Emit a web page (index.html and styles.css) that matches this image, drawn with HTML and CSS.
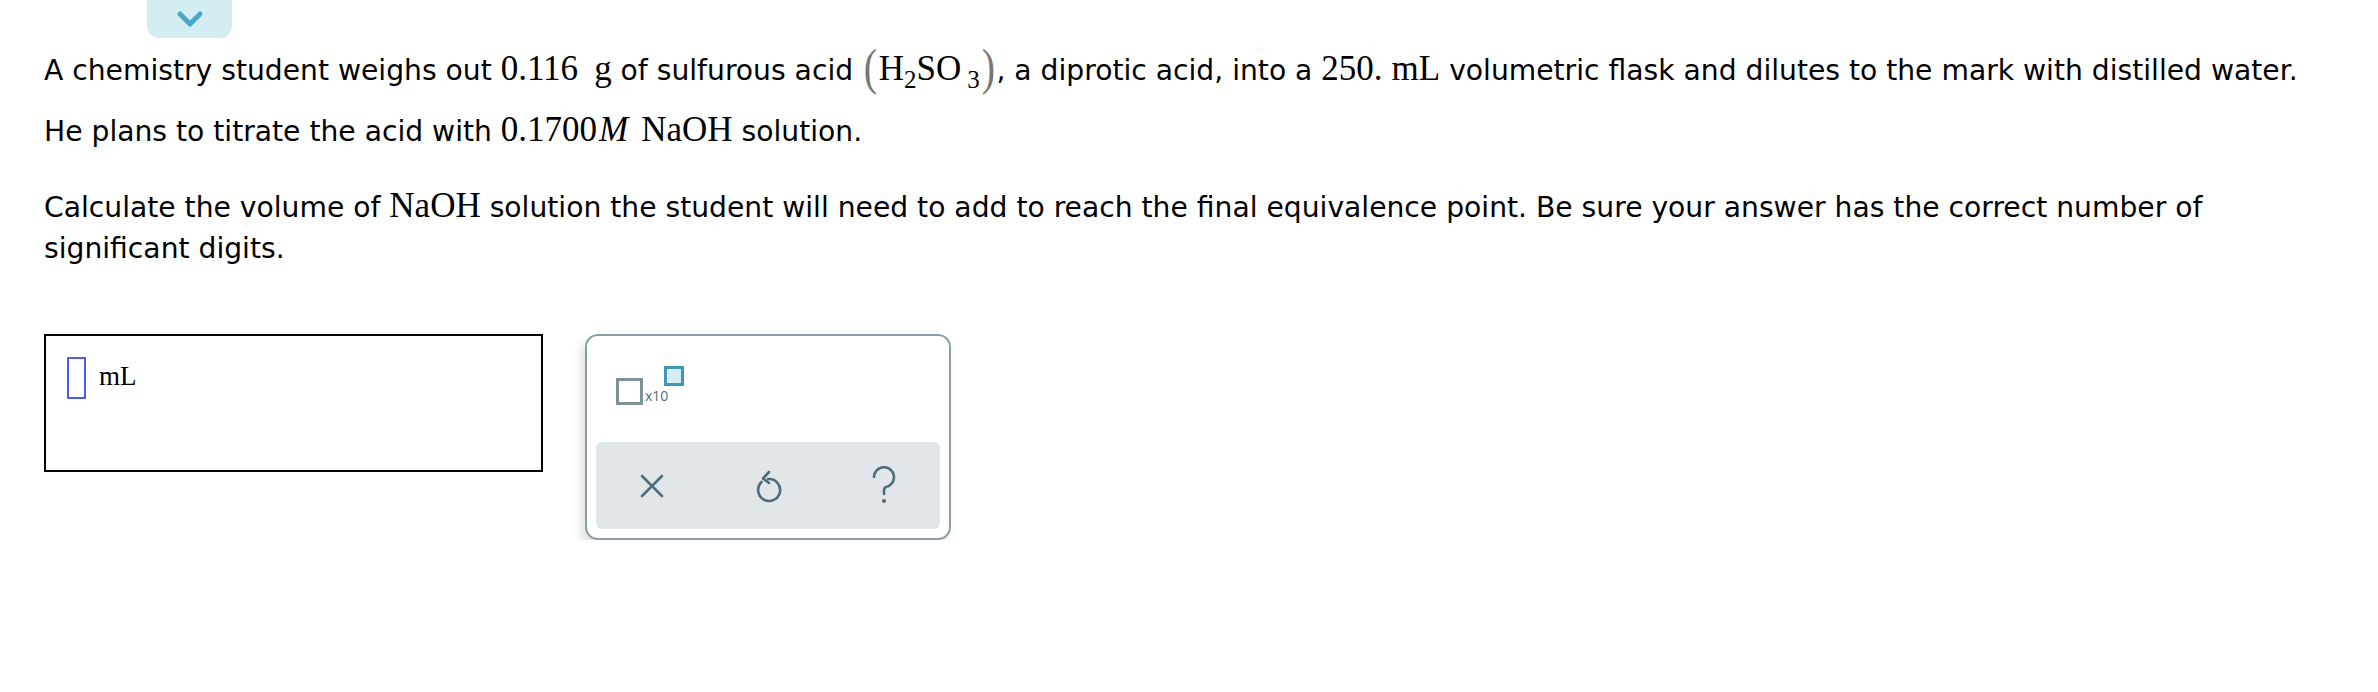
FILE: index.html
```html
<!DOCTYPE html>
<html>
<head>
<meta charset="utf-8">
<link rel="stylesheet" href="styles.css">
</head>
<body>
<div class="page">
  <div class="tabbar">
    <div class="tab-toggle">
      <svg width="30" height="20" viewBox="0 0 30 20"><path d="M5 5 L15 15 L25 5" fill="none" stroke="#4aa8c8" stroke-width="5" stroke-linecap="round" stroke-linejoin="round"/></svg>
    </div>
  </div>
  <p class="para para1">A chemistry student weighs out <span class="m">0.116</span><span class="m gap">g</span> of sulfurous acid <span class="m paren">(</span><span class="m">H<sub>2</sub>SO<sub class="s3">3</sub></span><span class="m paren">)</span>, a diprotic acid, into a <span class="m">250.</span> <span class="m">mL</span> volumetric flask and dilutes to the mark with distilled water.<br>He plans to titrate the acid with <span class="m">0.1700<i class="mi">M</i></span> <span class="m">NaOH</span> solution.</p>
  <p class="para para2">Calculate the volume of <span class="m">NaOH</span> solution the student will need to add to reach the final equivalence point. Be sure your answer has the correct number of<br>significant digits.</p>
  <div class="answer-row">
    <div class="answer-box">
      <span class="cursor-box"></span>
      <span class="unit">mL</span>
    </div>
    <div class="palette">
      <div class="palette-top">
        <div class="sci">
          <span class="sci-base"></span>
          <span class="sci-x">x10</span>
          <span class="sci-exp"></span>
        </div>
      </div>
      <div class="palette-bar">
        <button class="pbtn" aria-label="clear">
          <svg width="30" height="30" viewBox="0 0 30 30"><path d="M5 5 L25 25 M25 5 L5 25" stroke="#4e6d7b" stroke-width="2.6" stroke-linecap="round" fill="none"/></svg>
        </button>
        <button class="pbtn" aria-label="undo">
          <svg width="32" height="36" viewBox="0 0 32 36"><path d="M9.5 14 A11 11 0 1 0 16 11" fill="none" stroke="#4e6d7b" stroke-width="2.6" stroke-linecap="round"/><path d="M17 4 L11 10.5 L17 15" fill="none" stroke="#4e6d7b" stroke-width="2.6" stroke-linecap="round" stroke-linejoin="round"/></svg>
        </button>
        <button class="pbtn" aria-label="help">
          <svg width="28" height="40" viewBox="0 0 28 40"><path d="M4 11 A10 10 0 1 1 16 21 Q14 22 14 25 L14 28" fill="none" stroke="#4e6d7b" stroke-width="2.6" stroke-linecap="round"/><circle cx="14" cy="35" r="2" fill="#4e6d7b"/></svg>
        </button>
      </div>
    </div>
  </div>
</div>
</body>
</html>
```
FILE: styles.css
```css
html, body {
  margin: 0;
  padding: 0;
  background: #fff;
}
.page {
  padding-left: 44px;
  font-family: Verdana, "DejaVu Sans", sans-serif;
  font-size: 28.2px;
  color: #000;
}
.tabbar {
  height: 38px;
  padding-left: 103px;
}
.tab-toggle {
  width: 85px;
  height: 38px;
  background: #d4edf3;
  border-radius: 0 0 12px 12px;
  display: flex;
  align-items: center;
  justify-content: center;
}
.para {
  margin: 0;
}
.para1 {
  margin-top: 1px;
  line-height: 59px;
}
.para2 {
  margin-top: 24px;
  line-height: 41px;
}
.m {
  font-family: "Liberation Serif", "Times New Roman", serif;
  font-size: 35px;
}
.m.gap { margin-left: 16px; }
.m i { font-style: italic; }
.m i.mi { margin-left: 2px; margin-right: 4px; }
.m sub {
  font-size: 25px;
  vertical-align: -8px;
  line-height: 0;
}
.m sub.s3 { margin-left: 6px; }
.paren {
  display: inline-block;
  font-size: 50px;
  color: #777;
  line-height: 0;
  vertical-align: -4px;
  transform: scaleX(0.8);
}
.answer-row {
  display: flex;
  align-items: flex-start;
  gap: 42px;
  margin-top: 65px;
}
.answer-box {
  border: 2px solid #000;
  display: flex;
  align-items: flex-start;
  padding: 21px 0 0 21px;
  box-sizing: border-box;
  height: 138px;
  width: 499px;
}
.cursor-box {
  width: 19px;
  height: 42px;
  border: 2px solid #4a5cf0;
  box-sizing: border-box;
  border-radius: 1px;
}
.unit {
  font-family: "Liberation Serif", "Times New Roman", serif;
  font-size: 27px;
  margin-left: 13px;
  margin-top: 4px;
}
.palette {
  width: 366px;
  height: 206px;
  box-sizing: border-box;
  border: 2px solid #8a9da5;
  border-radius: 13px;
  box-shadow: -4px 6px 10px rgba(0,0,0,0.12);
  padding: 0 9px 9px 9px;
  display: flex;
  flex-direction: column;
  background: #fff;
}
.palette-top {
  flex: 1;
  padding: 30px 0 0 20px;
}
.sci {
  position: relative;
  width: 80px;
  height: 44px;
}
.sci-base {
  position: absolute;
  left: 0;
  top: 12px;
  width: 27px;
  height: 27px;
  border: 3px solid #7d9199;
  box-sizing: border-box;
}
.sci-x {
  position: absolute;
  left: 29px;
  top: 20px;
  font-family: "Open Sans", "DejaVu Sans", sans-serif;
  font-size: 14px;
  color: #4e6d7b;
}
.sci-exp {
  position: absolute;
  left: 48px;
  top: 0;
  width: 20px;
  height: 20px;
  border: 3px solid #3f98b2;
  background: #d4edf3;
  box-sizing: border-box;
}
.palette-bar {
  height: 87px;
  background: #e1e6e8;
  border-radius: 6px;
  display: flex;
  align-items: center;
  justify-content: center;
  gap: 56px;
}
.pbtn {
  background: none;
  border: none;
  padding: 0;
  width: 60px;
  height: 60px;
  display: flex;
  align-items: center;
  justify-content: center;
}
```
